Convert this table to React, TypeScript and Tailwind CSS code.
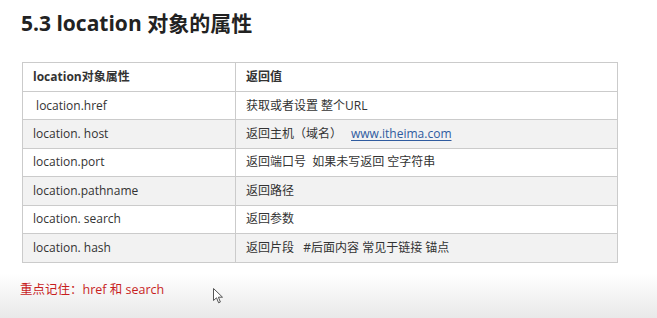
const ROWS = [
  { name: ' location.href', value: '获取或者设置 整个URL', shaded: false },
  { name: 'location. host', value: '返回主机（域名）', link: 'www.itheima.com', shaded: true },
  { name: 'location.port', value: '返回端口号\u00a0\u00a0如果未写返回 空字符串', shaded: false },
  { name: 'location.pathname', value: '返回路径', shaded: true },
  { name: 'location. search', value: '返回参数', shaded: false },
  { name: 'location. hash', value: '返回片段\u00a0\u00a0 #后面内容 常见于链接 锚点', shaded: true },
];

const FONT = "font-['Open_Sans','Noto_Sans_CJK_SC',sans-serif]";

function Cursor() {
  return (
    <svg className="absolute left-[213px] top-[288px]" width="11" height="16" viewBox="0 0 11 16">
      <path d="M0.5 0.5 L0.5 12.5 L3.5 9.8 L5.6 14.8 L7.4 14 L5.4 9.2 L9.5 9.2 Z" fill="#fff" stroke="#555" strokeWidth="1" strokeLinejoin="round" />
    </svg>
  );
}

export default function App() {
  return (
    <div className={`relative w-[657px] h-[318px] overflow-hidden bg-[linear-gradient(to_bottom,#ffffff_0%,#ffffff_86%,#e9e9e9_100%)] text-[#333] ${FONT}`}>
      <h1 className="pl-[21px] pt-[8px] text-[21px] leading-[30px] font-bold text-[#222] whitespace-pre">5.3 location 对象的属性</h1>

      <div className="ml-[22px] mt-[24px] w-[596px] border border-[#cbcbcb] text-[12px]">
        <div className="flex h-[29px] border-b border-[#cbcbcb] bg-white font-bold">
          <div className="w-[213px] shrink-0 border-r border-[#cbcbcb] pl-[10px] flex items-center">location对象属性</div>
          <div className="flex-1 pl-[10px] flex items-center">返回值</div>
        </div>
        {ROWS.map((r, i) => (
          <div
            key={i}
            className={`flex h-[28.4px] ${i < ROWS.length - 1 ? 'border-b border-[#cbcbcb]' : ''} ${r.shaded ? 'bg-[#f2f2f2]' : 'bg-white'}`}
          >
            <div className="w-[213px] shrink-0 border-r border-[#cbcbcb] pl-[10px] flex items-center whitespace-pre">{r.name}</div>
            <div className="flex-1 pl-[10px] flex items-center whitespace-pre">
              {r.value}
              {r.link && <span className="ml-[9px] text-[#2f5b9f] underline underline-offset-2">{r.link}</span>}
            </div>
          </div>
        ))}
      </div>

      <p className="pl-[20px] mt-[18px] text-[12.5px] text-[#c81e1e]">重点记住：href 和 search</p>

      <Cursor />
    </div>
  );
}
